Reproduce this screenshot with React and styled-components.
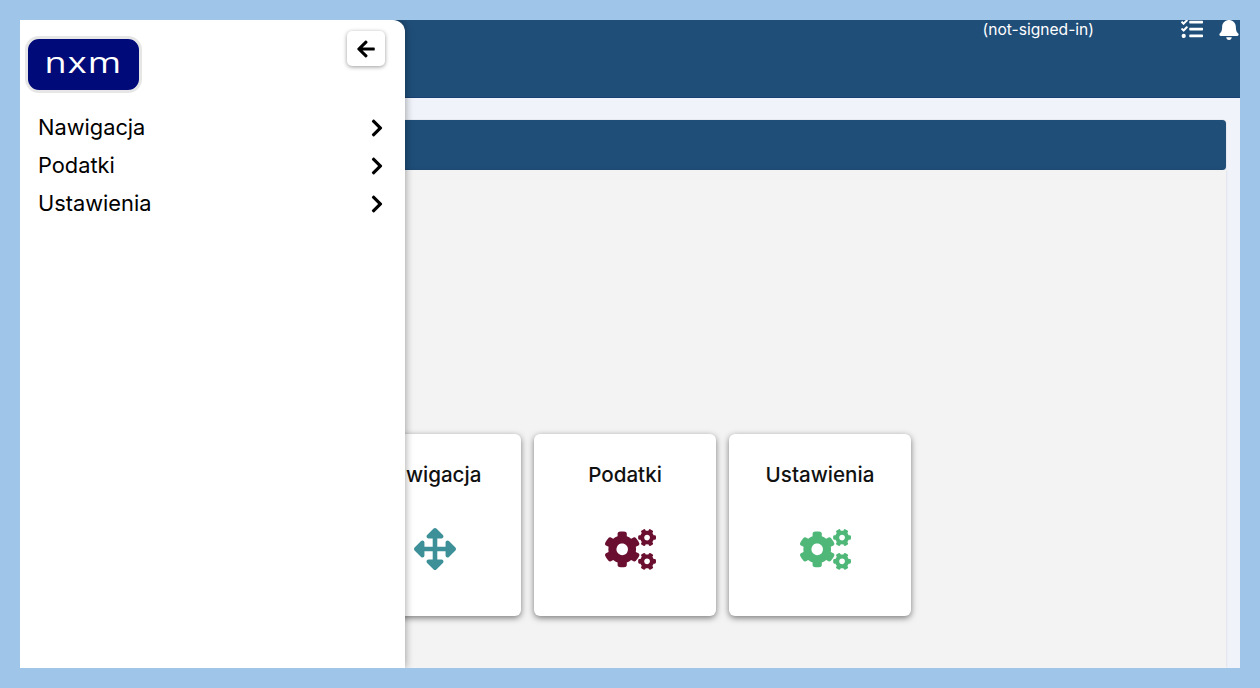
import styled, { createGlobalStyle } from 'styled-components';
import { FaArrowLeft, FaArrowsAlt, FaBell, FaChevronRight, FaCogs, FaTasks } from 'react-icons/fa';

const GlobalStyle = createGlobalStyle`
  html, body {
    margin: 0;
    height: 100%;
    background: #9fc5e8;
    font-family: Inter, "Liberation Sans", sans-serif;
  }
  body {
    padding: 20px;
    box-sizing: border-box;
    overflow: hidden;
  }
`;

const Frame = styled.div`
  position: relative;
  height: 648px;
  display: flex;
  flex-direction: column;
  overflow: hidden;
  background: #f0f4fa;
`;

const TopBar = styled.header`
  height: 77px;
  flex-shrink: 0;
  display: flex;
  justify-content: flex-end;
  align-items: flex-start;
  background: #1f4e79;
  border-bottom: 1px solid #1b3f72;
  color: #fff;
`;

const UserName = styled.span`
  margin: 1px 87px 0 0;
  font-size: 15.6px;
  line-height: 18px;
`;

const TopIcon = styled.span`
  display: flex;
  margin: ${({ $top }) => $top}px ${({ $right }) => $right}px 0 0;
  font-size: ${({ $size }) => $size}px;
`;

const Main = styled.main`
  flex: 1;
  display: flex;
  flex-direction: column;
  padding: 22px 14px 0;
`;

const PanelBar = styled.div`
  height: 50px;
  flex-shrink: 0;
  background: #1f4e79;
  border-radius: 4px;
  box-shadow: 0 0 1px rgba(0, 0, 0, 0.4);
`;

const PanelBody = styled.div`
  flex: 1;
  display: flex;
  gap: 13px;
  align-items: flex-start;
  padding: 264px 0 0 305px;
  background: #f3f3f3;
  box-shadow: 0 0 3px rgba(0, 0, 0, 0.12);
`;

const Card = styled.div`
  width: 182px;
  height: 182px;
  display: flex;
  flex-direction: column;
  align-items: center;
  background: #fff;
  border-radius: 6px;
  box-shadow: 0 2px 6px rgba(0, 0, 0, 0.5);
`;

const CardTitle = styled.div`
  margin-top: 29px;
  font-size: 20.6px;
  line-height: 24px;
  font-weight: 500;
  color: #111;
`;

const CardIcon = styled.div`
  height: 42px;
  display: flex;
  align-items: center;
  margin: 41px 0 0 10px;
  font-size: ${({ $size }) => $size}px;
  color: ${({ $color }) => $color};
`;

const Drawer = styled.aside`
  position: absolute;
  top: 0;
  left: 0;
  bottom: 0;
  width: 385px;
  background: #fff;
  border-top-right-radius: 12px;
  box-shadow: 0 0 8px rgba(0, 0, 0, 0.4);
`;

const DrawerHead = styled.div`
  display: flex;
  justify-content: space-between;
  align-items: flex-start;
  padding: 11px 20px 0 5px;
`;

const Logo = styled.div`
  width: 117px;
  height: 57px;
  margin-top: 5px;
  box-sizing: border-box;
  display: flex;
  align-items: center;
  justify-content: center;
  background: #000a78;
  border: 3px solid #e6e6e6;
  border-radius: 14px;
  padding-bottom: 6px;
`;

const LogoMark = styled.span`
  color: #fff;
  font-family: "Open Sans", sans-serif;
  font-size: 30px;
  font-weight: 400;
  line-height: 1;
  letter-spacing: 1px;
  transform: scaleX(1.2);
`;

const BackButton = styled.button`
  width: 38px;
  height: 35px;
  display: flex;
  align-items: center;
  justify-content: center;
  padding: 0;
  border: 0;
  border-radius: 5px;
  background: #fff;
  color: #000;
  font-size: 20px;
  box-shadow: 0 1px 4px rgba(0, 0, 0, 0.4);
`;

const Menu = styled.nav`
  display: flex;
  flex-direction: column;
  padding: 16px 18px 0 18px;
`;

const MenuRow = styled.div`
  height: 38px;
  display: flex;
  align-items: center;
  justify-content: space-between;
  color: #000;
  svg {
    font-size: 20px;
  }
`;

const MenuLabel = styled.span`
  font-size: 21.8px;
  padding-bottom: 2px;
`;

const menuItems = ['Nawigacja', 'Podatki', 'Ustawienia'];

const cards = [
  { title: 'Nawigacja', Icon: FaArrowsAlt, color: '#3d9098', size: 42 },
  { title: 'Podatki', Icon: FaCogs, color: '#6b0f30', size: 51 },
  { title: 'Ustawienia', Icon: FaCogs, color: '#4fb878', size: 51 },
];

const App = () => {
  return (
    <Frame>
      <GlobalStyle />
      <TopBar>
        <UserName>(not-signed-in)</UserName>
        <TopIcon $top={-2} $right={15} $size={22}>
          <FaTasks />
        </TopIcon>
        <TopIcon $top={-2} $right={0} $size={22}>
          <FaBell />
        </TopIcon>
      </TopBar>
      <Main>
        <PanelBar />
        <PanelBody>
          {cards.map(({ title, Icon, color, size }) => (
            <Card key={title}>
              <CardTitle>{title}</CardTitle>
              <CardIcon $color={color} $size={size}>
                <Icon />
              </CardIcon>
            </Card>
          ))}
        </PanelBody>
      </Main>
      <Drawer>
        <DrawerHead>
          <Logo>
            <LogoMark>nxm</LogoMark>
          </Logo>
          <BackButton aria-label="Zamknij">
            <FaArrowLeft />
          </BackButton>
        </DrawerHead>
        <Menu>
          {menuItems.map((item) => (
            <MenuRow key={item}>
              <MenuLabel>{item}</MenuLabel>
              <FaChevronRight />
            </MenuRow>
          ))}
        </Menu>
      </Drawer>
    </Frame>
  );
};

export default App;
